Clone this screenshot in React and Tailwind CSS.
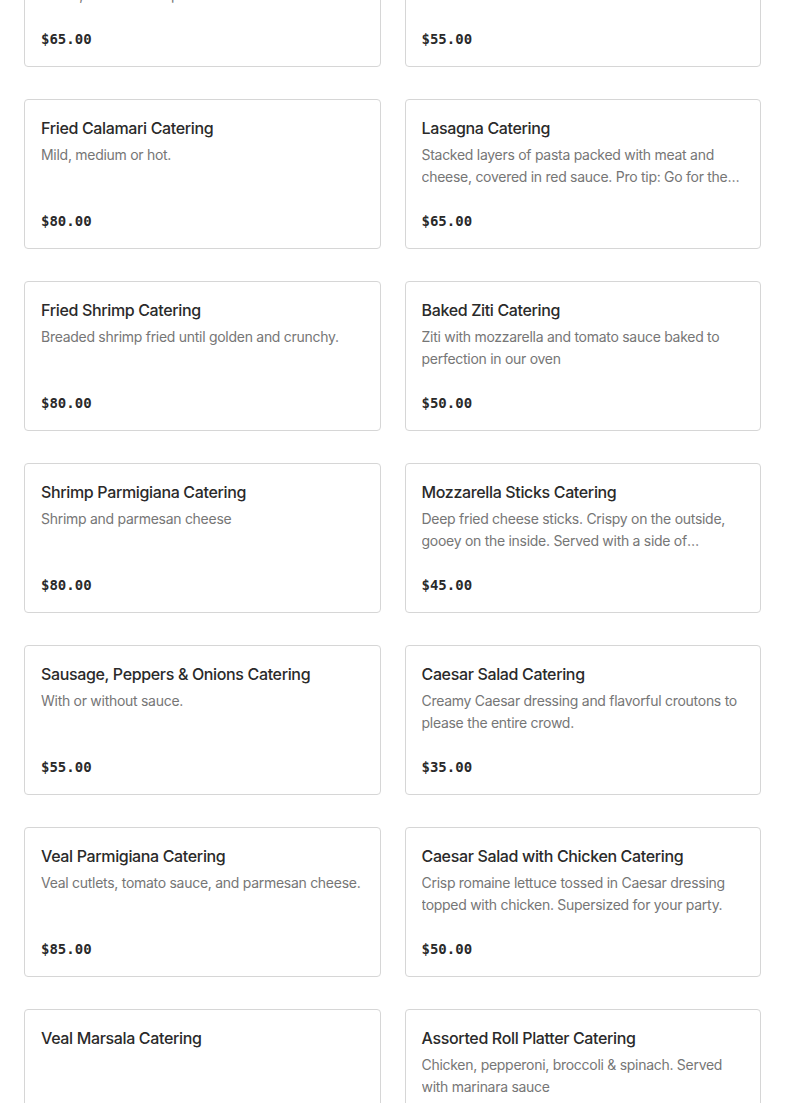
import React from "react";

const items = [
  { t: "Penne alla Vodka Catering", d: "Penne pasta tossed in our creamy pink vodka sauce, finished with parmesan cheese for a crowd pleasing", p: "$65.00" },
  { t: "Chicken Parmigiana Catering", d: "Breaded chicken cutlets with tomato sauce.", p: "$55.00" },
  { t: "Fried Calamari Catering", d: "Mild, medium or hot.", p: "$80.00" },
  { t: "Lasagna Catering", d: "Stacked layers of pasta packed with meat and cheese, covered in red sauce. Pro tip: Go for the corner pieces, they're the best part.", p: "$65.00" },
  { t: "Fried Shrimp Catering", d: "Breaded shrimp fried until golden and crunchy.", p: "$80.00" },
  { t: "Baked Ziti Catering", d: "Ziti with mozzarella and tomato sauce baked to perfection in our oven", p: "$50.00" },
  { t: "Shrimp Parmigiana Catering", d: "Shrimp and parmesan cheese", p: "$80.00" },
  { t: "Mozzarella Sticks Catering", d: "Deep fried cheese sticks. Crispy on the outside, gooey on the inside. Served with a side of marinara sauce.", p: "$45.00" },
  { t: "Sausage, Peppers & Onions Catering", d: "With or without sauce.", p: "$55.00" },
  { t: "Caesar Salad Catering", d: "Creamy Caesar dressing and flavorful croutons to please the entire crowd.", p: "$35.00" },
  { t: "Veal Parmigiana Catering", d: "Veal cutlets, tomato sauce, and parmesan cheese.", p: "$85.00" },
  { t: "Caesar Salad with Chicken Catering", d: "Crisp romaine lettuce tossed in Caesar dressing topped with chicken. Supersized for your party.", p: "$50.00" },
  { t: "Veal Marsala Catering", d: "", p: "$85.00" },
  { t: "Assorted Roll Platter Catering", d: "Chicken, pepperoni, broccoli & spinach. Served with marinara sauce", p: "$40.00" },
];

function Card({ t, d, p }) {
  return (
    <div className="flex h-[150px] flex-col rounded-[4px] border border-[#d6d6d6] bg-white px-4 pt-4 pb-[17px]">
      <div className="text-[16px] leading-6 font-medium text-[#2a2a2a] font-['Inter',sans-serif] tracking-[-0.35px]">{t}</div>
      {d ? (
        <div className="mt-1 line-clamp-2 text-[14px] leading-[22px] text-[#767676] font-['Inter',sans-serif] tracking-[-0.28px]">{d}</div>
      ) : null}
      <div className="mt-auto text-[14px] leading-5 font-bold text-[#2a2a2a] font-['DejaVu_Sans_Mono',monospace]">{p}</div>
    </div>
  );
}

export default function App() {
  return (
    <div className="h-[1103px] overflow-hidden bg-white">
      <div className="mt-[-83px] grid grid-cols-2 gap-x-6 gap-y-8 px-6">
        {items.map((it, i) => (
          <Card key={i} {...it} />
        ))}
      </div>
    </div>
  );
}
